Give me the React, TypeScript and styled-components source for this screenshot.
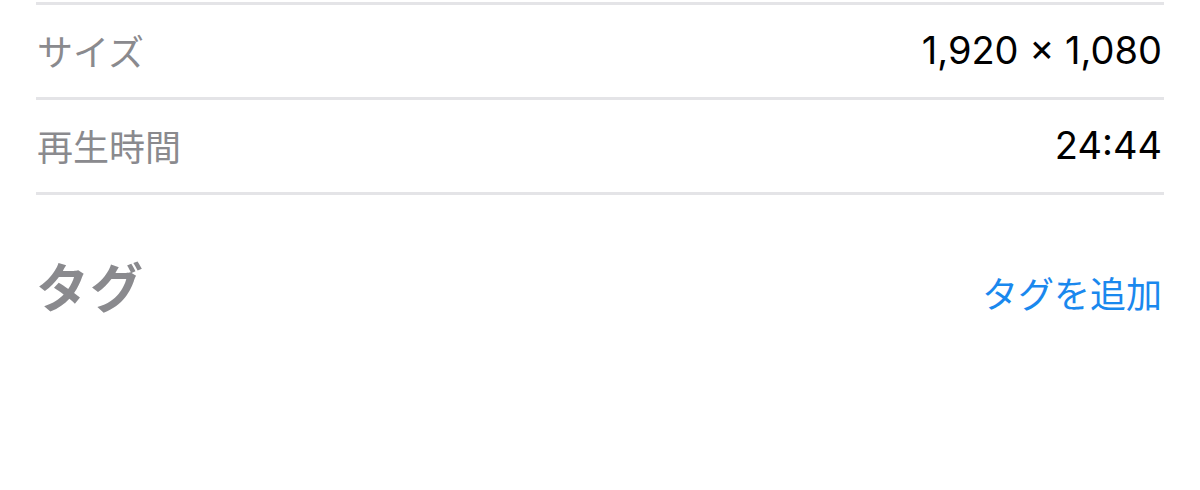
import React from "react";
import styled, { createGlobalStyle } from "styled-components";

const GlobalStyle = createGlobalStyle`
    html, body {
        margin: 0;
        padding: 0;
        background: #ffffff;
        font-family: "Noto Sans CJK JP", "Noto Sans", sans-serif;
    }
`

const Page = styled.div`
    width: 1200px;
    height: 490px;
    box-sizing: border-box;
    padding: 2px 36px 0 36px;
    background: #ffffff;
`

const InfoList = styled.div`
    display: flex;
    flex-direction: column;
    border-top: 3px solid #e4e4e7;
`

const InfoRow = styled.div`
    display: flex;
    align-items: center;
    justify-content: space-between;
    height: 92px;
    border-bottom: 3px solid #e4e4e7;
`

const Label = styled.span`
    font-size: 36px;
    color: #8a8a8e;
    padding-left: 1px;
    margin-top: -3px;
`

const Value = styled.span`
    font-size: 38px;
    color: #000000;
    padding-right: 2px;
    margin-top: -3px;
    font-family: "Inter", "Noto Sans CJK JP", sans-serif;
`

const SectionHeader = styled.div`
    display: flex;
    align-items: baseline;
    justify-content: space-between;
    margin-top: 52px;
`

const SectionTitle = styled.h2`
    margin: 0;
    font-size: 53px;
    font-weight: 700;
    color: #8a8a8e;
    letter-spacing: 1px;
`

const LinkButton = styled.button`
    border: 0;
    background: none;
    padding: 0 2px 0 0;
    font-family: inherit;
    font-size: 36px;
    color: #1a88ee;
    cursor: pointer;
`

const rows = [
    { label: "サイズ", value: "1,920 × 1,080" },
    { label: "再生時間", value: "24:44" },
]

export default function App() {
    return (
        <>
            <GlobalStyle />
            <Page>
                <InfoList>
                    {rows.map((row) => (
                        <InfoRow key={row.label}>
                            <Label>{row.label}</Label>
                            <Value>{row.value}</Value>
                        </InfoRow>
                    ))}
                </InfoList>
                <SectionHeader>
                    <SectionTitle>タグ</SectionTitle>
                    <LinkButton>タグを追加</LinkButton>
                </SectionHeader>
            </Page>
        </>
    )
}
